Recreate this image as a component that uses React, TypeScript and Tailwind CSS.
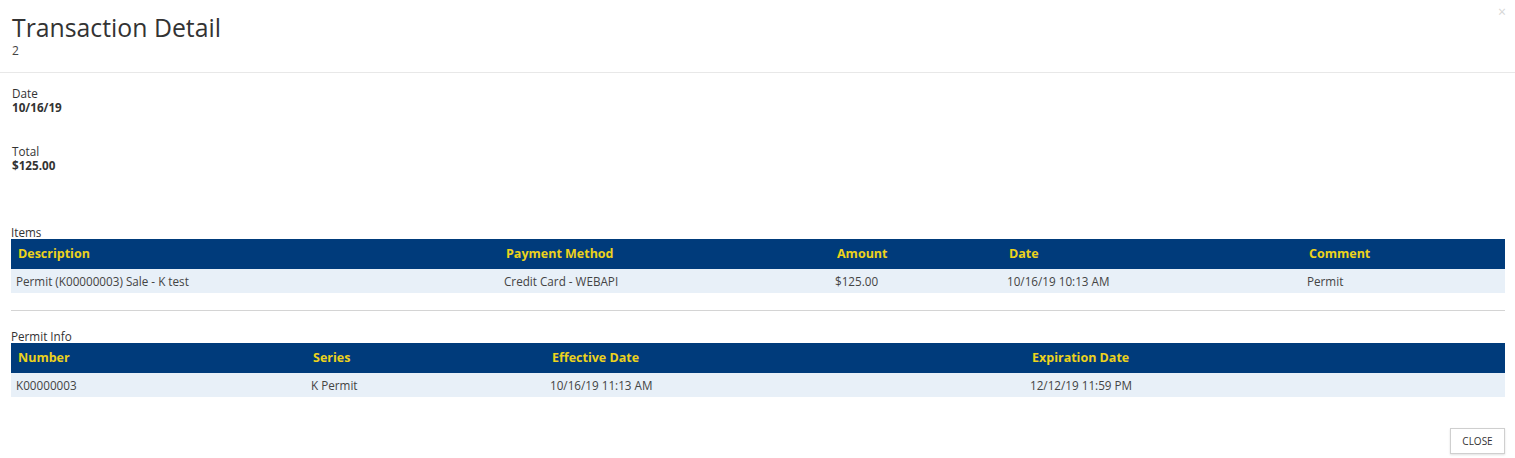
import React from "react";

const font = { fontFamily: '"Open Sans", "Noto Sans", sans-serif' };

function Table({
  cols,
  headers,
  row,
}: {
  cols: string;
  headers: string[];
  row: string[];
}) {
  return (
    <div>
      <div className={`grid ${cols} h-[30px] items-center bg-[#003b7b]`}>
        {headers.map((h) => (
          <div key={h} className="pl-[7px] text-[12.5px] font-bold leading-[18px] text-[#ecd21c]">
            {h}
          </div>
        ))}
      </div>
      <div className={`grid ${cols} h-[24px] items-center bg-[#e8f0f8]`}>
        {row.map((c, i) => (
          <div key={i} className="pl-[5px] text-[11.7px] leading-[16px] text-[#444]">
            {c}
          </div>
        ))}
      </div>
    </div>
  );
}

export default function App() {
  return (
    <div style={font} className="relative w-[1515px] h-[458px] bg-white text-[#333] overflow-hidden">
      <div className="absolute right-[9px] top-[5px] text-[14px] leading-[14px] text-[#d6d6d6]">×</div>
      <div className="pl-[12px] pt-[11px] pb-[13px] border-b border-[#e8e8e8]">
        <div className="text-[24.8px] leading-[32px] text-[#333]">Transaction Detail</div>
        <div className="text-[12px] leading-[16px] text-[#444]">2</div>
      </div>
      <div className="pl-[11px] pr-[10px] pt-[13px]">
        <div className="pl-px">
          <div className="text-[11.7px] leading-[14px]">Date</div>
          <div className="text-[11.7px] leading-[14px] font-bold">10/16/19</div>
        </div>
        <div className="pl-px mt-[30px]">
          <div className="text-[11.7px] leading-[14px]">Total</div>
          <div className="text-[11.7px] leading-[14px] font-bold">$125.00</div>
        </div>
        <div className="mt-[53px] text-[11.7px] leading-[14px]">Items</div>
        <Table
          cols="grid-cols-[488px_331px_172px_300px_1fr]"
          headers={["Description", "Payment Method", "Amount", "Date", "Comment"]}
          row={["Permit (K00000003) Sale - K test", "Credit Card - WEBAPI", "$125.00", "10/16/19 10:13 AM", "Permit"]}
        />
        <div className="mt-[17px] h-px bg-[#d4d4d4]" />
        <div className="mt-[18px] text-[11.7px] leading-[14px]">Permit Info</div>
        <Table
          cols="grid-cols-[295px_239px_480px_1fr]"
          headers={["Number", "Series", "Effective Date", "Expiration Date"]}
          row={["K00000003", "K Permit", "10/16/19 11:13 AM", "12/12/19 11:59 PM"]}
        />
        <div className="mt-[31px] flex justify-end">
          <button className="w-[55px] h-[26px] border border-[#cfcfcf] bg-white text-[10px] leading-[12px] text-[#333] shadow-[0_1px_2px_rgba(0,0,0,0.12)]">
            CLOSE
          </button>
        </div>
      </div>
    </div>
  );
}
